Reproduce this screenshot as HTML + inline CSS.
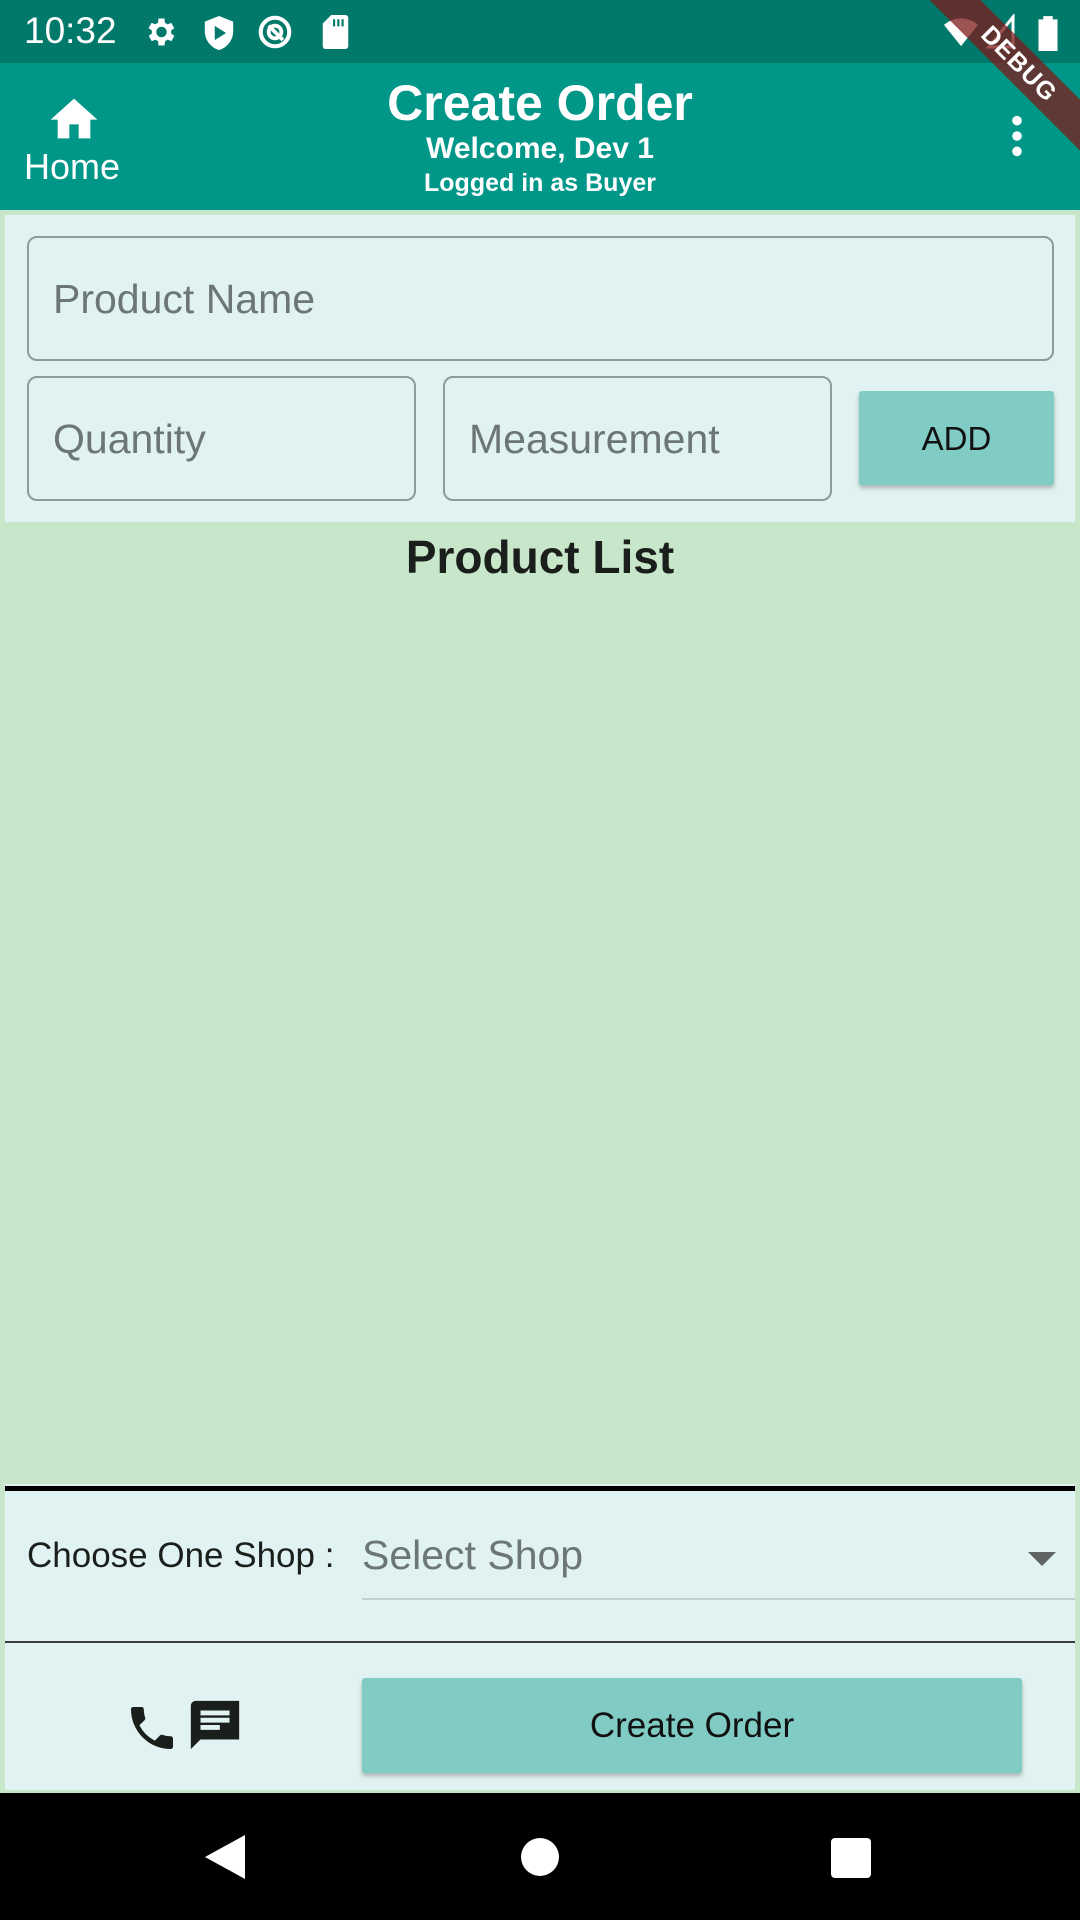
<!DOCTYPE html>
<html><head><meta charset="utf-8">
<style>
*{margin:0;padding:0;box-sizing:border-box}
body{width:1080px;height:1920px;overflow:hidden;background:#C8E6C9;font-family:"Liberation Sans",sans-serif;position:relative}
.abs{position:absolute}
.status{left:0;top:0;width:1080px;height:63px;background:#00796B}
.appbar{left:0;top:63px;width:1080px;height:147px;background:#009688}
.w{color:#fff}
.field{position:absolute;border:2.5px solid #8c9c9a;border-radius:10px;}
.ph{position:absolute;left:24px;font-size:41px;color:#6b7675;}
</style></head><body>
<div class="abs status"></div>
<div class="abs w" style="left:24px;top:10px;font-size:37px;">10:32</div>
<svg class="abs" style="left:142px;top:14px" width="36" height="36" viewBox="0 0 24 24"><path fill="#fff" d="M19.4 13a7.5 7.5 0 0 0 0-2l2.1-1.6-2-3.5-2.5 1a7 7 0 0 0-1.7-1L15 3h-4l-.4 2.9a7 7 0 0 0-1.7 1l-2.5-1-2 3.5L6.6 11a7.5 7.5 0 0 0 0 2l-2.1 1.6 2 3.5 2.5-1a7 7 0 0 0 1.7 1L11 21h4l.4-2.9a7 7 0 0 0 1.7-1l2.5 1 2-3.5zM13 15.5a3.5 3.5 0 1 1 0-7 3.5 3.5 0 0 1 0 7z"/></svg>
<svg class="abs" style="left:202px;top:14px" width="34" height="38" viewBox="0 0 24 26"><path fill="#fff" d="M12 1L2 5v7c0 6 4.5 11.5 10 13 5.5-1.5 10-7 10-13V5z"/><path fill="#00796B" d="M9 8v10l8-5z"/></svg>
<svg class="abs" style="left:256px;top:13px" width="38" height="38" viewBox="0 0 24 24"><circle cx="12" cy="12" r="9" fill="none" stroke="#fff" stroke-width="2.6"/><circle cx="12" cy="12" r="4" fill="none" stroke="#fff" stroke-width="2.4"/><path d="M8 8l9 9" stroke="#fff" stroke-width="2.4"/></svg>
<svg class="abs" style="left:322px;top:15px" width="27" height="34" viewBox="0 0 18 24"><path fill="#fff" d="M6 0h10a2 2 0 0 1 2 2v20a2 2 0 0 1-2 2H2a2 2 0 0 1-2-2V6z"/><path stroke="#00796B" stroke-width="1.5" d="M8 3v5M11 3v5M14 3v5"/></svg>
<svg class="abs" style="left:944px;top:16px" width="34" height="32" viewBox="0 0 24 22"><path fill="#fff" d="M12 21L0 6a18 18 0 0 1 24 0z"/></svg>
<svg class="abs" style="left:985px;top:14px" width="32" height="36" viewBox="0 0 20 24"><path fill="none" stroke="#fff" stroke-width="2" d="M18 2v20H2z"/></svg>
<svg class="abs" style="left:1038px;top:13px" width="20" height="38" viewBox="0 0 12 24"><path fill="#fff" d="M3 2h6v2h3v20H0V4h3z"/></svg>

<div class="abs appbar"></div>
<svg class="abs" style="left:46px;top:91px" width="56" height="48" viewBox="0 0 24 20"><path fill="#fff" d="M10 20v-6h4v6h5v-8h3L12 3 2 12h3v8z"/></svg>
<div class="abs w" style="left:24px;top:146px;font-size:36px;">Home</div>
<div class="abs w" style="left:0;width:1080px;top:74px;text-align:center;font-size:50px;font-weight:bold;">Create Order</div>
<div class="abs w" style="left:0;width:1080px;top:132px;text-align:center;font-size:30px;font-weight:bold;">Welcome, Dev 1</div>
<div class="abs w" style="left:0;width:1080px;top:169px;text-align:center;font-size:25px;font-weight:bold;">Logged in as Buyer</div>
<svg class="abs" style="left:1000px;top:113px" width="34" height="46" viewBox="0 0 8 24"><circle cx="4" cy="4" r="2.5" fill="#fff"/><circle cx="4" cy="12" r="2.5" fill="#fff"/><circle cx="4" cy="20" r="2.5" fill="#fff"/></svg>
<div class="abs" style="left:879px;top:46px;width:280px;height:36px;background:rgba(125,25,25,0.75);transform:rotate(45deg);color:#fff;font-weight:bold;font-size:25px;text-align:center;line-height:36px;letter-spacing:1px">DEBUG</div>

<div class="abs" style="left:5px;top:215px;width:1070px;height:307px;background:#E0F2F1"></div>
<div class="field" style="left:27px;top:236px;width:1027px;height:125px"><div class="ph" style="top:38px">Product Name</div></div>
<div class="field" style="left:27px;top:376px;width:389px;height:125px"><div class="ph" style="top:38px">Quantity</div></div>
<div class="field" style="left:443px;top:376px;width:389px;height:125px"><div class="ph" style="top:38px">Measurement</div></div>
<div class="abs" style="left:859px;top:391px;width:195px;height:94px;background:#80CBC4;border-radius:3px;box-shadow:0 3px 5px rgba(0,0,0,0.25);text-align:center;line-height:96px;font-size:33px;color:#111">ADD</div>
<div class="abs" style="left:0;width:1080px;top:530px;text-align:center;font-size:46px;font-weight:bold;color:#1b1f1c">Product List</div>

<div class="abs" style="left:5px;top:1484px;width:1070px;height:306px;background:#E0F2F1"></div>
<div class="abs" style="left:5px;top:1486px;width:1070px;height:5px;background:#000"></div>
<div class="abs" style="left:27px;top:1536px;font-size:35px;color:#1b1f1c">Choose One Shop :</div>
<div class="abs" style="left:362px;top:1532px;font-size:41px;color:#6b7675">Select Shop</div>
<div class="abs" style="left:362px;top:1598px;width:713px;height:2px;background:#c3cfcd"></div>
<svg class="abs" style="left:1028px;top:1551px" width="28" height="16" viewBox="0 0 10 5"><path fill="#5f6463" d="M0 0h10L5 5z"/></svg>
<div class="abs" style="left:5px;top:1641px;width:1070px;height:2px;background:#3a3f3e"></div>
<svg class="abs" style="left:124px;top:1700px" width="56" height="56" viewBox="0 0 24 24"><path fill="#1b1f1c" d="M6.6 10.8a15 15 0 0 0 6.6 6.6l2.2-2.2a1 1 0 0 1 1-.25 11.4 11.4 0 0 0 3.6.6 1 1 0 0 1 1 1V20a1 1 0 0 1-1 1A17 17 0 0 1 3 4a1 1 0 0 1 1-1h3.5a1 1 0 0 1 1 1c0 1.25.2 2.45.6 3.6a1 1 0 0 1-.25 1z"/></svg>
<svg class="abs" style="left:186px;top:1696px" width="58" height="58" viewBox="0 0 24 24"><path fill="#1b1f1c" d="M22 2H4a2 2 0 0 0-2 2v18l4-4h16V2zM6 14V12h8v2zm0-3V9h12v2zm0-3V6h12v2z"/></svg>
<div class="abs" style="left:362px;top:1678px;width:660px;height:95px;background:#80CBC4;border-radius:3px;box-shadow:0 3px 5px rgba(0,0,0,0.25);text-align:center;line-height:95px;font-size:35px;color:#111">Create Order</div>

<div class="abs" style="left:0;top:1793px;width:1080px;height:127px;background:#000"></div>
<svg class="abs" style="left:205px;top:1835px" width="40" height="44" viewBox="0 0 10 11"><path fill="#fff" d="M10 0v11L0 5.5z"/></svg>
<div class="abs" style="left:521px;top:1838px;width:38px;height:38px;border-radius:50%;background:#fff"></div>
<div class="abs" style="left:831px;top:1838px;width:40px;height:40px;border-radius:4px;background:#fff"></div>
</body></html>
